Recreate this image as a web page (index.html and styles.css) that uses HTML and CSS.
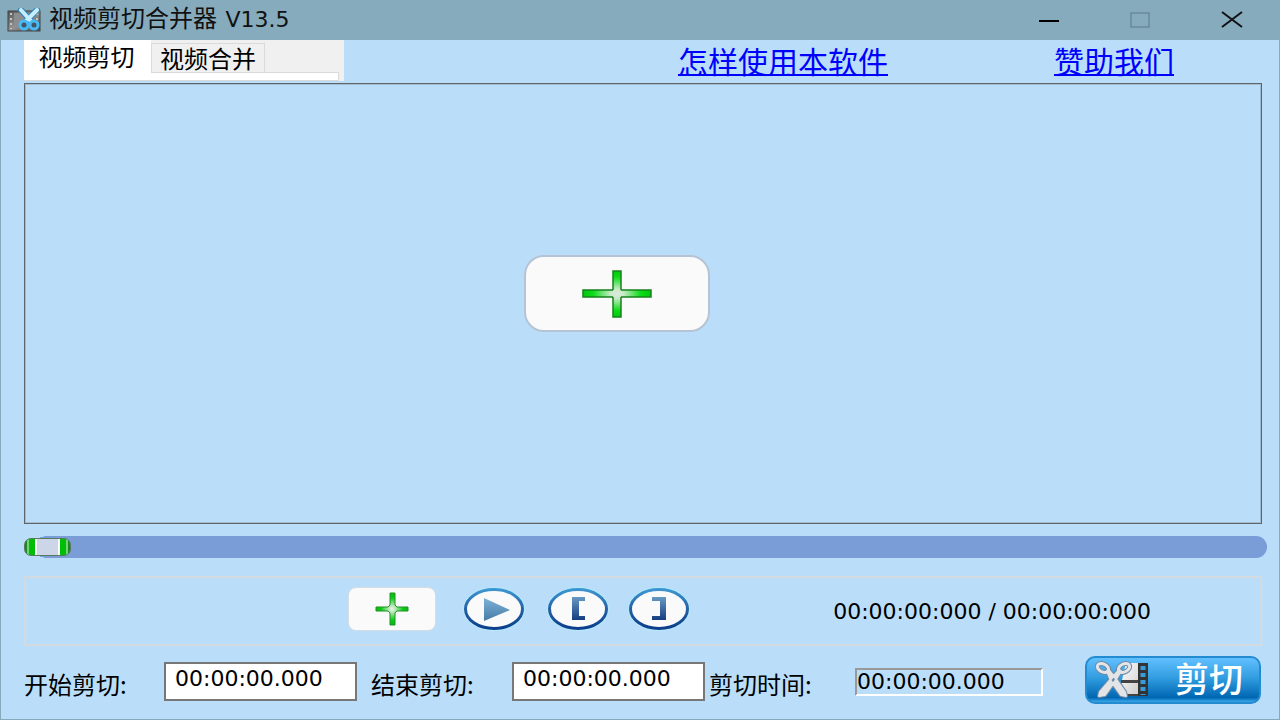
FILE: index.html
```html
<!DOCTYPE html>
<html lang="zh-CN">
<head>
<meta charset="utf-8">
<title>视频剪切合并器 V13.5</title>
<link rel="stylesheet" href="styles.css">
</head>
<body>
<div class="window">
  <header class="titlebar">
    <svg class="app-icon" width="34" height="24" viewBox="0 0 34 24" aria-hidden="true">
      <defs>
        <linearGradient id="film" x1="0" y1="0" x2="1" y2="1"><stop offset="0" stop-color="#555"/><stop offset=".5" stop-color="#929292"/><stop offset="1" stop-color="#484848"/></linearGradient>
      </defs>
      <rect x="1" y="3" width="32" height="20" fill="url(#film)" stroke="#444"/>
      <rect x="7" y="5" width="20" height="15" fill="#8b8d8f"/>
      <path d="M4 5v16M30 5v16" stroke="#c4c4c4" stroke-width="2" stroke-dasharray="2 3"/>
      <path d="M14 2l10 11M30 2L19 13" stroke="#3182b5" stroke-width="6" stroke-linecap="round"/>
      <path d="M14 2l10 11M30 2L19 13" stroke="#c4edff" stroke-width="4" stroke-linecap="round"/>
      <ellipse cx="17" cy="17" rx="4" ry="4" fill="#456" stroke="#48b9f4" stroke-width="3"/>
      <ellipse cx="27" cy="17" rx="4" ry="4" fill="#456" stroke="#48b9f4" stroke-width="3"/>
    </svg>
    <h1 class="title">视频剪切合并器 <span class="version">V13.5</span></h1>
    <div class="window-buttons">
      <button class="window-button" type="button" aria-label="最小化"><svg width="22" height="20" viewBox="0 0 22 20"><path d="M2 11h20" stroke="#000" stroke-width="2"/></svg></button>
      <button class="window-button" type="button" aria-label="最大化" disabled><svg width="22" height="20" viewBox="0 0 22 20"><rect x="2" y="3" width="18" height="14" fill="none" stroke="#6a8c9b" stroke-width="1.5"/></svg></button>
      <button class="window-button" type="button" aria-label="关闭"><svg width="22" height="20" viewBox="0 0 22 20"><path d="M1 2l20 15M21 2L1 17" stroke="#111" stroke-width="2"/></svg></button>
    </div>
  </header>

  <main class="content">
    <div class="top">
      <div class="tabs" role="tablist">
        <button class="tab active" type="button" role="tab" aria-selected="true">视频剪切</button>
        <button class="tab" type="button" role="tab" aria-selected="false">视频合并</button>
      </div>
      <nav class="links">
        <a href="#help">怎样使用本软件</a>
        <a href="#donate">赞助我们</a>
      </nav>
    </div>

    <section class="preview">
      <button class="add-large" type="button" aria-label="添加视频">
        <svg width="70" height="48" viewBox="0 0 70 48">
          <defs>
            <radialGradient id="glow" gradientUnits="userSpaceOnUse" cx="35" cy="24" r="34" gradientTransform="translate(0 7) scale(1 .7)"><stop offset="0" stop-color="#e2e8e2"/><stop offset=".2" stop-color="#c5eac5"/><stop offset=".7" stop-color="#0bdc18"/><stop offset="1" stop-color="#00c80c"/></radialGradient>
          </defs>
          <path d="M31 1h8v19h30v7H39v20h-8V27H1v-7h30z" fill="url(#glow)"/>
          <path d="M31 20V1h8v19M39 20h30v7H39M39 27v20h-8V27M31 27H1v-7h30" fill="none" stroke="#16821b" stroke-width="1.5"/>
        </svg>
      </button>
    </section>

    <input class="seek" type="range" min="0" max="100" value="0" aria-label="播放进度">

    <section class="controls">
      <div class="buttons">
        <button class="add-small" type="button" aria-label="添加">
          <svg width="34" height="34" viewBox="0 0 34 34">
            <defs><radialGradient id="glow-small" gradientUnits="userSpaceOnUse" cx="17" cy="17" r="17"><stop offset="0" stop-color="#eef5ee"/><stop offset=".2" stop-color="#b6e6b6"/><stop offset=".65" stop-color="#08cc13"/><stop offset="1" stop-color="#08b50f"/></radialGradient></defs>
            <path d="M15 1h5v12l2 2h11v4H22l-2 2v12h-5V21l-2-2H1v-4h12l2-2z" fill="url(#glow-small)" stroke="#229129"/>
          </svg>
        </button>
        <button class="round play" type="button" aria-label="播放">
          <svg width="64" height="46" viewBox="0 0 64 46">
            <defs>
              <linearGradient id="ring" x1="0" y1="0" x2="0" y2="1"><stop offset="0" stop-color="#3d96d1"/><stop offset=".5" stop-color="#2561a5"/><stop offset="1" stop-color="#0d3f8c"/></linearGradient>
              <linearGradient id="arrow" x1="0" y1="0" x2="0" y2="1"><stop offset="0" stop-color="#7eb2d7"/><stop offset="1" stop-color="#457ba7"/></linearGradient>
              <linearGradient id="mark" x1="0" y1="0" x2="0" y2="1"><stop offset="0" stop-color="#6799c4"/><stop offset="1" stop-color="#153d80"/></linearGradient>
            </defs>
            <ellipse cx="32" cy="23" rx="31" ry="22" fill="#b4ebfa"/>
            <ellipse cx="32" cy="23" rx="28.5" ry="19.5" fill="#fafafa" stroke="url(#ring)" stroke-width="3"/>
            <path d="M22 12l26 12-26 11z" fill="url(#arrow)"/>
          </svg>
        </button>
        <button class="round start" type="button" aria-label="设为开始">
          <svg width="64" height="46" viewBox="0 0 64 46">
            <ellipse cx="32" cy="23" rx="31" ry="22" fill="#b4ebfa"/>
            <ellipse cx="32" cy="23" rx="28.5" ry="19.5" fill="#fafafa" stroke="url(#ring)" stroke-width="3"/>
            <path d="M26 11h13v4h-6v15h6v4H26z" fill="url(#mark)"/>
          </svg>
        </button>
        <button class="round end" type="button" aria-label="设为结束">
          <svg width="64" height="46" viewBox="0 0 64 46">
            <ellipse cx="32" cy="23" rx="31" ry="22" fill="#b4ebfa"/>
            <ellipse cx="32" cy="23" rx="28.5" ry="19.5" fill="#fafafa" stroke="url(#ring)" stroke-width="3"/>
            <path d="M25 11h14v23H25v-4h8V15h-8z" fill="url(#mark)"/>
          </svg>
        </button>
      </div>
      <div class="time">00:00:00:000 / 00:00:00:000</div>
    </section>

    <form class="cut-form">
      <div class="field">
        <label for="start">开始剪切:</label>
        <input class="time-input" id="start" type="text" value="00:00:00.000">
      </div>
      <div class="field second">
        <label for="end">结束剪切:</label>
        <input class="time-input" id="end" type="text" value="00:00:00.000">
      </div>
      <div class="field third">
        <label for="length">剪切时间:</label>
        <input class="time-input readonly" id="length" type="text" value="00:00:00.000" readonly>
      </div>
      <button class="cut" type="button">
        <svg width="56" height="38" viewBox="0 0 56 38" aria-hidden="true">
          <defs><linearGradient id="frame" x1="0" y1="0" x2="1" y2="1"><stop offset="0" stop-color="#fff"/><stop offset="1" stop-color="#ccc"/></linearGradient></defs>
          <path d="M31 2h13v17H27zM26 22h18v11H30z" fill="url(#frame)"/>
          <path d="M26 19h18v3H26zM29 33h15v2H29z" fill="#444"/>
          <path d="M43 2h10v33H43z" fill="#333"/>
          <path d="M48 5v29" stroke="#3a9bdc" stroke-width="5" stroke-dasharray="4 3"/>
          <g fill="none" stroke="#6f8ba5" stroke-width="5"><ellipse cx="8" cy="7" rx="6" ry="4" transform="rotate(28 8 7)"/><ellipse cx="29" cy="7" rx="6" ry="4" transform="rotate(-28 29 7)"/></g>
          <path d="M12 10l2-1 7 9 9 13 1 4-5-1-10-14zM26 10l-2-1-8 9-11 13-1 4 6-1 10-14z" fill="#e2e4e7" stroke="#6f8ba5" stroke-width="4" stroke-linejoin="round"/>
          <path d="M12 10l2-1 7 9 9 13 1 4-5-1-10-14zM26 10l-2-1-8 9-11 13-1 4 6-1 10-14z" fill="#e2e4e7" stroke="#e2e4e7" stroke-width="2" stroke-linejoin="round"/>
          <g fill="none" stroke="#e2e4e7" stroke-width="3"><ellipse cx="8" cy="7" rx="6" ry="4" transform="rotate(28 8 7)"/><ellipse cx="29" cy="7" rx="6" ry="4" transform="rotate(-28 29 7)"/></g>
        </svg>
        <span>剪切</span>
      </button>
    </form>
  </main>
</div>
</body>
</html>
```
FILE: styles.css
```css
* {
  box-sizing: border-box;
}

body {
  margin: 0;
  font-family: "DejaVu Sans", "Noto Sans CJK SC", sans-serif;
  color: #000;
}

button {
  margin: 0;
  padding: 0;
  border: 0;
  background: none;
  font: inherit;
}

svg {
  display: block;
}

.window {
  display: flex;
  flex-direction: column;
  min-height: 100vh;
  border: 1px solid #85abbd;
  border-top: 0;
  background: #badefa;
}

.titlebar {
  display: flex;
  align-items: center;
  height: 40px;
  padding-left: 6px;
  background: #85abbd;
}

.title {
  margin: 0 0 4px 8px;
  font: 400 24px/36px "Noto Sans CJK SC", sans-serif;
  color: #111;
}

.version {
  padding-left: 3px;
  font: 22px/36px "DejaVu Sans", sans-serif;
}

.window-buttons {
  display: flex;
  gap: 48px;
  margin-left: auto;
  padding-right: 25px;
}

.window-button {
  display: flex;
  width: 44px;
  height: 40px;
  align-items: center;
  justify-content: center;
}

.content {
  display: flex;
  flex: 1;
  flex-direction: column;
  padding: 0 17px 15px 23px;
}

.top {
  display: flex;
  height: 43px;
}

.tabs {
  display: flex;
  width: 320px;
  height: 41px;
  align-items: flex-start;
  background:
    linear-gradient(#fff, #fff) 0 33px / 314px 7px no-repeat,
    linear-gradient(#dadada, #dadada) 0 32px / 315px 9px no-repeat,
    #f0f0f0;
}

.tab {
  width: 114px;
  height: 30px;
  margin-top: 3px;
  border: 1px solid #dadada;
  background: #f0f0f0;
  font: 24px/28px "Noto Sans CJK SC", sans-serif;
}

.tab.active {
  width: 127px;
  height: 40px;
  margin-top: 0;
  border: 0;
  background: #fff;
  padding: 0 2px 8px 0;
}

.links {
  display: flex;
  flex: 1;
  justify-content: flex-end;
  gap: 166px;
  padding-right: 88px;
  font: 30px/40px "Noto Sans CJK SC", sans-serif;
}

.links a {
  color: #00f;
  text-decoration-thickness: 2px;
}

.preview {
  display: flex;
  flex: 1;
  align-items: center;
  justify-content: center;
  min-height: 240px;
  padding: 0 52px 20px 0;
  border: 1px solid #5f6468;
  outline: 1px solid #a4bccf;
  outline-offset: -2px;
}

.add-large {
  display: flex;
  width: 186px;
  height: 77px;
  align-items: center;
  justify-content: center;
  border: 2px solid #b5c4d4;
  border-radius: 20px;
  background: #fafafa;
}

.seek {
  height: 22px;
  margin: 12px -5px 18px 0;
  border-radius: 11px;
  background: #7a9cd7;
  background: radial-gradient(ellipse 16px 11px at 24px 11px, #7a9cd7 98%, #badefa) 0 0 / 24px 22px no-repeat, linear-gradient(90deg, #badefa 24px, #7a9cd7 24px);
  appearance: none;
}

.seek::-webkit-slider-thumb {
  width: 47px;
  height: 18px;
  border: 1px solid #587b60;
  border-radius: 7px;
  background: linear-gradient(90deg, #168b20 0 2px, #78cf7a 2px 4px, #00bd08 4px 10px, #fff 10px 12px, #cdd5e9 12px 33px, #fff 33px 35px, #00bd08 35px 41px, #78cf7a 41px 43px, #168b20 43px);
  appearance: none;
}

.controls {
  display: flex;
  height: 70px;
  align-items: center;
  justify-content: space-between;
  padding: 0 109px 4px 322px;
  border: 2px solid #d4dbe0;
}

.buttons {
  display: flex;
  align-items: center;
}

.add-small {
  display: flex;
  width: 88px;
  height: 44px;
  align-items: center;
  justify-content: center;
  border: 1px solid #d4dce4;
  border-radius: 8px;
  background: #fafafa;
}

.play {
  margin-left: 26px;
}

.start {
  margin-left: 20px;
}

.end {
  margin-left: 17px;
}

.time {
  padding-top: 6px;
  font-size: 22px;
  line-height: 28px;
  white-space: nowrap;
}

.cut-form {
  display: flex;
  align-items: center;
  margin-top: 10px;
}

.field {
  display: flex;
  align-items: center;
}

.field label {
  width: 140px;
  padding-top: 8px;
  font: 24px/36px "Noto Sans CJK SC", sans-serif;
  white-space: nowrap;
}

.second {
  margin-left: 14px;
}

.second label {
  width: 141px;
}

.third {
  margin-left: 4px;
}

.third label {
  width: 146px;
}

.time-input {
  width: 193px;
  height: 39px;
  margin-top: 3px;
  padding: 0 8px 6px 9px;
  border: 2px solid #777;
  background: #fff;
  font: 22px/28px "DejaVu Sans", sans-serif;
}

.time-input.readonly {
  width: 188px;
  height: 28px;
  margin-top: 4px;
  padding: 0 0 1px;
  border-color: #999 #fff #fff #999;
  background: transparent;
}

.cut {
  display: flex;
  width: 176px;
  height: 48px;
  align-items: center;
  justify-content: space-between;
  margin-left: auto;
  margin-right: 1px;
  padding: 0 16px 0 8px;
  border: 2px solid #258bd0;
  border-radius: 10px;
  background: linear-gradient(#62c0ff, #319de0 45%, #0067b3 90%, #3ba9eb);
  color: #fff;
  font: 500 34px/40px "Noto Sans CJK SC", sans-serif;
}

.cut span {
  padding-bottom: 4px;
}
```
